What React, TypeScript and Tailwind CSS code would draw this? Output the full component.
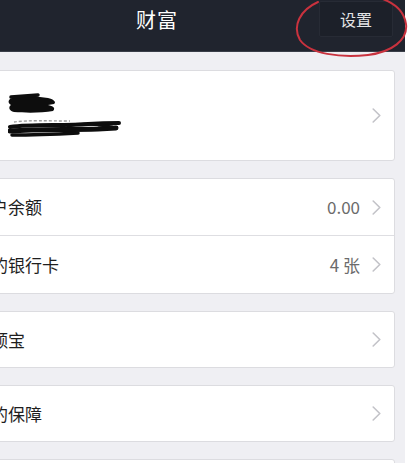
import React from "react";

const font = { fontFamily: '"Noto Sans CJK SC", "Noto Sans", sans-serif' };

const Chevron = () => (
  <svg width="9" height="15" viewBox="0 0 9 15" className="shrink-0">
    <path d="M1.2 1 L7.8 7.5 L1.2 14" fill="none" stroke="#c3c3c8" strokeWidth="1.6" strokeLinecap="round" strokeLinejoin="round" />
  </svg>
);

const Row = ({ label, value, last, tall }: { label: string; value?: string; last?: boolean; tall?: boolean }) => (
  <div
    className={`${tall ? "h-[57px]" : "h-[55px]"} flex items-center pl-[9px] pr-[13px] ${
      last ? "" : "border-b border-[#dedee2]"
    }`}
  >
    <span className="text-[17px] text-[#1e1e1e] flex-1">{label}</span>
    {value && <span className="text-[17px] text-[#6b6b6b] mr-[12px]">{value}</span>}
    <Chevron />
  </div>
);

const Card = ({ children }: { children: React.ReactNode }) => (
  <div className="w-[431px] -ml-[36px] bg-white border border-[#dcdce0] rounded-[3px]">
    {children}
  </div>
);

const App = () => {
  return (
    <div className="w-[418px] h-[463px] overflow-hidden bg-white relative" style={font}>
      <div className="w-[405px] h-full bg-[#efeff3] overflow-hidden">
        <div className="h-[52px] bg-[#20242e] flex items-start border-b border-[#3a3e48]">
          <div className="h-[40px] flex items-center w-full pr-[12px]">
            <span className="ml-[136px] text-[20px] text-white tracking-[1px]">财富</span>
            <div className="flex-1" />
            <div className="mt-[-2px] w-[74px] h-[36px] flex items-center justify-center bg-[#1c2029] border border-[#272b35] rounded-[2px] text-[16px] text-[#e4e4e6]">
              设置
            </div>
          </div>
        </div>

        <div className="flex flex-col gap-[17px] pt-[18px]">
          <Card>
            <div className="h-[89px] flex items-center pr-[13px]">
              <div className="flex-1 pl-[43px]">
                <svg width="115" height="46" viewBox="0 0 115 46">
                  <path d="M2 6 C8 2 22 1 32 4 L40 5 C45 6 49 9 46 11 L40 12 C45 13 48 15 45 18 C34 20 18 20 6 19 C1 18 0 14 3 12 C0 10 0 8 2 6 Z" fill="#0d0d0d" />
                  <path d="M3 4 L30 2" stroke="#0d0d0d" strokeWidth="3.5" strokeLinecap="round" />
                  <path d="M6 29 C20 27 40 28 62 28" stroke="#a0a0a0" strokeWidth="1.4" strokeDasharray="3 2" fill="none" />
                  <path d="M2 34 C25 31 55 33 80 31 C95 30 105 30 111 30" stroke="#0d0d0d" strokeWidth="4" strokeLinecap="round" fill="none" />
                  <path d="M2 38 C30 36 60 37 90 36 L108 35" stroke="#0d0d0d" strokeWidth="5" strokeLinecap="round" fill="none" />
                  <path d="M4 42 C30 42 50 41 70 40" stroke="#0d0d0d" strokeWidth="3.5" strokeLinecap="round" fill="none" />
                  <path d="M60 33 C70 30 84 30 104 34" stroke="#0d0d0d" strokeWidth="3" strokeLinecap="round" fill="none" />
                </svg>
              </div>
              <Chevron />
            </div>
          </Card>

          <Card>
            <Row label="账户余额" value="0.00" tall />
            <Row label="我的银行卡" value="4 张" last tall />
          </Card>

          <Card>
            <Row label="余额宝" last />
          </Card>

          <Card>
            <Row label="我的保障" last />
          </Card>

          <Card>
            <Row label="我的" last />
          </Card>
        </div>
      </div>

      <svg className="absolute left-0 top-0 pointer-events-none" width="418" height="70" viewBox="0 0 418 70">
        <path
          d="M318 2 C300 10 292 26 300 40 C310 54 340 58 368 55 C392 52 408 40 406 24 C404 10 392 2 380 -2"
          fill="none"
          stroke="#c9323e"
          strokeWidth="2"
          strokeLinecap="round"
        />
      </svg>
    </div>
  );
};

export default App;
